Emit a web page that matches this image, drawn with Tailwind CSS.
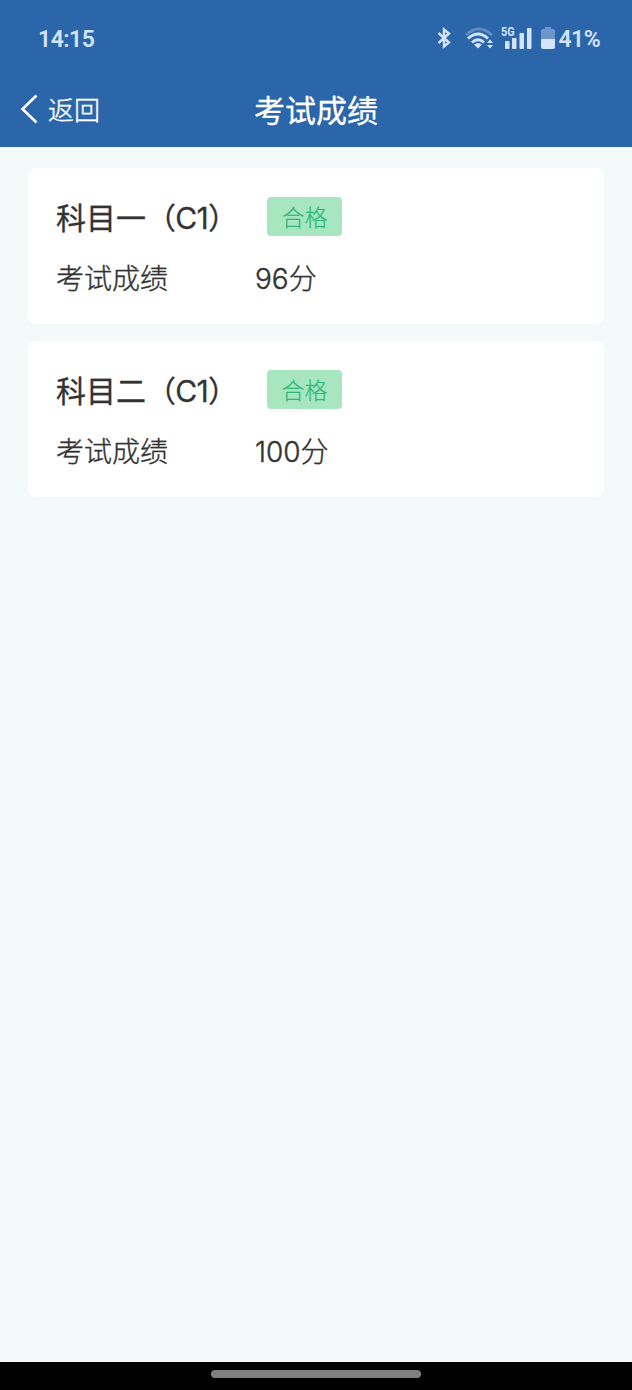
<!DOCTYPE html>
<html lang="zh-CN">
<head>
    <meta charset="UTF-8">
    <meta name="viewport" content="width=device-width, initial-scale=1.0">
    <title>考试成绩</title>
    <script src="https://cdn.jsdelivr.net/npm/@tailwindcss/browser@4"></script>
</head>

<body class="h-[1390px] flex flex-col overflow-hidden bg-[#f4f9fa] text-[#333333] font-['Inter','Noto_Sans_CJK_SC',sans-serif]">
    <!-- Header -->
    <header class="h-[147px] shrink-0 bg-[#2b65aa] text-white">
        <!-- Status bar -->
        <div class="h-[76px] pl-[38px] pr-[32px] flex items-center justify-between text-[#d3e3fa]">
            <span class="pt-[2px] text-[23px] leading-none tracking-[-0.5px] font-semibold font-['Roboto',sans-serif]">14:15</span>
            <div class="flex items-center">
                <!-- Bluetooth -->
                <svg class="w-[14px] h-[22px]" viewBox="0 0 14 22" fill="none" stroke="currentColor" stroke-width="2.4">
                    <path d="M0.500 6 L11 15.500 L6 19.500 V2.500 L11 6.500 L0.500 16"/>
                </svg>
                <!-- Wi-Fi -->
                <svg class="w-[30px] h-[24px] ml-[13px]" viewBox="0 0 30 24" fill="none" stroke="currentColor" stroke-width="2.8">
                    <path d="M1 9 Q14 -3 27 9" class="opacity-30"/>
                    <path d="M3 12.500 Q13 3.500 23 12.500"/>
                    <path d="M7 16.500 Q13 11 19 16.500"/>
                    <path d="M9 18.500 Q13 15.500 17 18.500 L13 22.500 Z" fill="currentColor" stroke="none"/>
                    <path d="M22 17 L25 13.500 L28 17 Z M22 19 L25 22.500 L28 19 Z" fill="currentColor" stroke="none"/>
                </svg>
                <!-- Signal -->
                <svg class="w-[32px] h-[24px] ml-[6px] overflow-visible" viewBox="0 0 32 24" fill="currentColor">
                    <text x="0" y="10" font-size="12" font-weight="700" font-family="Roboto" textLength="13.500" lengthAdjust="spacingAndGlyphs">5G</text>
                    <rect x="4" y="15" width="4.500" height="8" rx="1"/>
                    <rect x="11" y="12" width="4.500" height="11" rx="1"/>
                    <rect x="18.500" y="7" width="4.500" height="16" rx="1"/>
                    <rect x="26" y="2" width="4.500" height="21" rx="1"/>
                </svg>
                <!-- Battery -->
                <svg class="w-[14px] h-[24px] ml-[8px]" viewBox="0 0 14 24" fill="currentColor">
                    <path d="M4 1 H10 V3 H12 Q14 3 14 5 V13 H0 V5 Q0 3 2 3 H4 Z" class="opacity-40"/>
                    <path d="M0 13 H14 V21 Q14 23 12 23 H2 Q0 23 0 21 Z"/>
                </svg>
                <span class="ml-[4px] pt-[2px] text-[23px] leading-none tracking-[-0.6px] font-semibold font-['Roboto',sans-serif]">41%</span>
            </div>
        </div>

        <!-- Title bar -->
        <div class="h-[66px] px-[20px] grid grid-cols-3 items-center">
            <a href="#" class="flex items-center gap-[10px] text-[26px] leading-none font-light">
                <svg class="w-[18px] h-[30px]" viewBox="0 0 18 30" fill="none" stroke="currentColor" stroke-width="2.6">
                    <path d="M16.500 1.500 L2.500 15 L16.500 28.500"/>
                </svg>
                <span class="pt-[3px] [-webkit-text-stroke:0.4px_currentColor]">返回</span>
            </a>
            <h1 class="pt-[2px] text-center text-[31px] leading-none font-normal [-webkit-text-stroke:0.3px_currentColor]">考试成绩</h1>
        </div>
    </header>

    <!-- Results -->
    <main class="flex-1 px-[28px] pt-[21px] flex flex-col gap-[17px]">
        <section class="h-[156px] bg-white rounded-lg px-[28px] pt-[29px]">
            <div class="h-[39px] flex items-center">
                <h2 class="w-[211px] pt-[2px] text-[30px] leading-none font-normal whitespace-nowrap [-webkit-text-stroke:0.3px_currentColor]">科目一<span class="tracking-[-0.7px]">（C1）</span></h2>
                <span class="w-[75px] h-[39px] pt-[3px] flex items-center justify-center rounded-[4px] bg-[#a8e6bf] text-[#2fb87a] text-[23px] leading-none font-light [-webkit-text-stroke:0.2px_currentColor]">合格</span>
            </div>
            <div class="mt-[22px] h-[40px] pt-[2px] flex items-center text-[28px] leading-none font-light [-webkit-text-stroke:0.4px_currentColor]">
                <span class="w-[199px]">考试成绩</span>
                <span>96分</span>
            </div>
        </section>

        <section class="h-[156px] bg-white rounded-lg px-[28px] pt-[29px]">
            <div class="h-[39px] flex items-center">
                <h2 class="w-[211px] pt-[2px] text-[30px] leading-none font-normal whitespace-nowrap [-webkit-text-stroke:0.3px_currentColor]">科目二<span class="tracking-[-0.7px]">（C1）</span></h2>
                <span class="w-[75px] h-[39px] pt-[3px] flex items-center justify-center rounded-[4px] bg-[#a8e6bf] text-[#2fb87a] text-[23px] leading-none font-light [-webkit-text-stroke:0.2px_currentColor]">合格</span>
            </div>
            <div class="mt-[22px] h-[40px] pt-[2px] flex items-center text-[28px] leading-none font-light [-webkit-text-stroke:0.4px_currentColor]">
                <span class="w-[199px]">考试成绩</span>
                <span>100分</span>
            </div>
        </section>
    </main>

    <!-- Gesture bar -->
    <footer class="h-[28px] shrink-0 bg-black flex justify-center pt-[8px]">
        <div class="w-[210px] h-[8px] rounded-full bg-[#808080]"></div>
    </footer>
</body>
</html>
